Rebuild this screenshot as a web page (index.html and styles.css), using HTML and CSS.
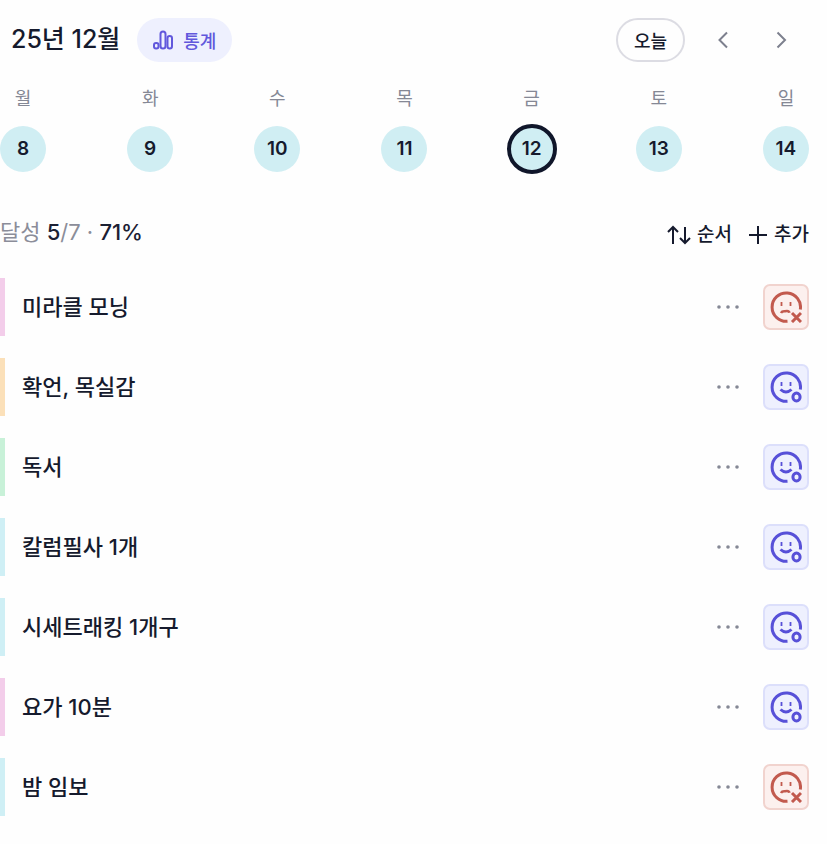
FILE: index.html
```
<!DOCTYPE html>
<html lang="ko">
<head>
  <meta charset="UTF-8">
  <meta name="viewport" content="width=device-width, initial-scale=1.0">
  <title>습관 기록</title>
  <link rel="stylesheet" href="styles.css">
</head>
<body>
  <!-- shared icons -->
  <svg class="sprite" aria-hidden="true">
    <symbol id="icon-more" viewBox="0 0 24 24">
      <circle cx="2" cy="12" r="1.8"/><circle cx="11" cy="12" r="1.8"/><circle cx="20" cy="12" r="1.8"/>
    </symbol>
    <symbol id="icon-done" viewBox="0 0 32 32">
      <path d="M17.500 30.300A14.200 14.200 0 1 1 30.300 18.500" />
      <path d="M11.500 11v4M20.500 11v4" stroke-width="1.800"/>
      <path d="M10.500 18.500q5.500 5 11 0" stroke-width="3"/>
      <ellipse cx="26.500" cy="26" rx="3.600" ry="4"/>
    </symbol>
    <symbol id="icon-missed" viewBox="0 0 32 32">
      <path d="M17.500 30.300A14.200 14.200 0 1 1 30.300 18.500"/>
      <path d="M11.500 11v4M20.500 11v4" stroke-width="1.800"/>
      <path d="M11 22q1-2 4-1.700 4-1 4.500 1.500" stroke-width="2.600"/>
      <path d="M22 22l9 9M31 22l-9 9"/>
    </symbol>
  </svg>

  <main class="tracker">
    <header class="header">
      <div class="header-left">
        <h1>25년 12월</h1>
        <button type="button" class="stats-btn">
          <svg width="20" height="20" viewBox="0 0 20 20">
            <rect x="1" y="13" width="4.500" height="5.500" rx="2"/>
            <rect x="7.500" y="1.500" width="5" height="17" rx="2.500"/>
            <rect x="14.500" y="6" width="4.500" height="12.500" rx="2.200"/>
          </svg>
          통계
        </button>
      </div>
      <nav class="header-nav">
        <button type="button" class="today-btn">오늘</button>
        <div class="pager">
          <button type="button" aria-label="이전 주">
            <svg width="20" height="20" viewBox="0 0 20 20"><path d="M14 2.500L6.500 10l7.500 7.500"/></svg>
          </button>
          <button type="button" aria-label="다음 주">
            <svg width="20" height="20" viewBox="0 0 20 20"><path d="M6.500 2.500L14 10l-7.500 7.500"/></svg>
          </button>
        </div>
      </nav>
    </header>

    <section class="week">
      <div class="day"><span>월</span><button type="button">8</button></div>
      <div class="day"><span>화</span><button type="button">9</button></div>
      <div class="day"><span>수</span><button type="button">10</button></div>
      <div class="day"><span>목</span><button type="button">11</button></div>
      <div class="day"><span>금</span><button type="button" class="selected">12</button></div>
      <div class="day"><span>토</span><button type="button">13</button></div>
      <div class="day"><span>일</span><button type="button">14</button></div>
    </section>

    <section class="summary">
      <p>달성 <b>5</b>/7 · <b>71%</b></p>
      <div class="actions">
        <button type="button">
          <svg width="24" height="20" viewBox="0 0 24 20"><path d="M6 19V2M1 7l5-5 5 5M18 2v16M13 13l5 5 5-5"/></svg>
          순서
        </button>
        <button type="button">
          <svg width="20" height="20" viewBox="0 0 20 20"><path d="M10 1v18M1 10h18"/></svg>
          추가
        </button>
      </div>
    </section>

    <ul class="habits">
      <li class="habit pink">
        <span class="name">미라클 모닝</span>
        <button type="button" class="more" aria-label="더보기"><svg><use href="#icon-more"/></svg></button>
        <button type="button" class="check missed" aria-label="미완료"><svg><use href="#icon-missed"/></svg></button>
      </li>
      <li class="habit orange">
        <span class="name">확언, 목실감</span>
        <button type="button" class="more" aria-label="더보기"><svg><use href="#icon-more"/></svg></button>
        <button type="button" class="check" aria-label="완료"><svg><use href="#icon-done"/></svg></button>
      </li>
      <li class="habit green">
        <span class="name">독서</span>
        <button type="button" class="more" aria-label="더보기"><svg><use href="#icon-more"/></svg></button>
        <button type="button" class="check" aria-label="완료"><svg><use href="#icon-done"/></svg></button>
      </li>
      <li class="habit blue">
        <span class="name">칼럼필사 1개</span>
        <button type="button" class="more" aria-label="더보기"><svg><use href="#icon-more"/></svg></button>
        <button type="button" class="check" aria-label="완료"><svg><use href="#icon-done"/></svg></button>
      </li>
      <li class="habit blue">
        <span class="name">시세트래킹 1개구</span>
        <button type="button" class="more" aria-label="더보기"><svg><use href="#icon-more"/></svg></button>
        <button type="button" class="check" aria-label="완료"><svg><use href="#icon-done"/></svg></button>
      </li>
      <li class="habit pink">
        <span class="name">요가 10분</span>
        <button type="button" class="more" aria-label="더보기"><svg><use href="#icon-more"/></svg></button>
        <button type="button" class="check" aria-label="완료"><svg><use href="#icon-done"/></svg></button>
      </li>
      <li class="habit blue">
        <span class="name">밤 임보</span>
        <button type="button" class="more" aria-label="더보기"><svg><use href="#icon-more"/></svg></button>
        <button type="button" class="check missed" aria-label="미완료"><svg><use href="#icon-missed"/></svg></button>
      </li>
    </ul>
  </main>
</body>
</html>
```
FILE: styles.css
```
* {
  box-sizing: border-box;
}
body {
  margin: 0;
  font-family: Inter, "Noto Sans CJK KR", sans-serif;
  font-weight: 500;
  background-color: #fefefe;
  color: #151a2d;
}
button {
  display: flex;
  align-items: center;
  justify-content: center;
  padding: 0;
  border: none;
  background: none;
  font: inherit;
  color: inherit;
  cursor: pointer;
}
svg {
  fill: none;
  stroke: currentColor;
  stroke-width: 2;
}
.sprite {
  position: absolute;
  width: 0;
  height: 0;
}
.tracker {
  padding: 18px 18px 28px 0;
}
.header {
  display: flex;
  justify-content: space-between;
  align-items: center;
  padding-left: 11px;
}
.header-left {
  display: flex;
  align-items: center;
  gap: 17px;
}
h1 {
  margin: 0;
  padding-bottom: 2px;
  font-size: 25px;
  line-height: 42px;
  font-weight: 500;
}
.stats-btn {
  gap: 10px;
  height: 44px;
  padding: 0 16px;
  border-radius: 22px;
  background-color: #eef0fe;
  color: #6158dc;
  font-size: 18px;
}
.header-nav {
  display: flex;
  gap: 10px;
}
.today-btn {
  height: 44px;
  padding: 0 16px;
  border: 2px solid #dcdce3;
  border-radius: 22px;
  font-size: 18px;
}
.pager {
  display: flex;
  gap: 2px;
}
.pager button {
  width: 56px;
  color: #7d808e;
}
.week {
  display: flex;
  justify-content: space-between;
  margin-top: 23px;
}
.day {
  display: flex;
  flex-direction: column;
  align-items: center;
  gap: 13px;
}
.day span {
  font-size: 18px;
  line-height: 28px;
  font-weight: 400;
  color: #858895;
}
.day button {
  width: 46px;
  height: 46px;
  padding-bottom: 2px;
  border-radius: 50%;
  background-color: #d0eef3;
  font-size: 19px;
  font-weight: 600;
}
.day .selected {
  outline: 4px solid #10162a;
  outline-offset: -2px;
}
.summary {
  display: flex;
  justify-content: space-between;
  align-items: flex-end;
  margin-top: 44px;
}
.summary p {
  margin: 0;
  font-size: 22px;
  line-height: 32px;
  font-weight: 400;
  color: #8b8d99;
}
.summary b {
  font-weight: 500;
  color: #1b2033;
}
.actions {
  display: flex;
  gap: 16px;
}
.actions button {
  gap: 6px;
  font-size: 19px;
  line-height: 26px;
}
.habits {
  display: grid;
  gap: 22px;
  margin: 30px 0 0;
  padding: 0;
  list-style: none;
}
.habit {
  display: flex;
  align-items: center;
  height: 58px;
  padding-left: 17px;
  border-left: 5px solid;
}
.pink {
  border-color: #f3cdea;
}
.orange {
  border-color: #fbe0b9;
}
.green {
  border-color: #c8f1d8;
}
.blue {
  border-color: #cfeff5;
}
.name {
  flex: 1;
  padding-bottom: 4px;
  font-size: 22px;
}
.more {
  height: 44px;
  margin-right: 22px;
  color: #858895;
}
.more svg {
  width: 24px;
  height: 24px;
  fill: currentColor;
  stroke: none;
}
.check {
  width: 46px;
  height: 46px;
  border: 2px solid #dcdffb;
  border-radius: 7px;
  background-color: #eef0fe;
  color: #5750d8;
}
.check svg {
  width: 32px;
  height: 32px;
  stroke-width: 3;
}
.missed {
  border-color: #f1d3ce;
  background-color: #fcf0ee;
  color: #c25a4e;
}
```
